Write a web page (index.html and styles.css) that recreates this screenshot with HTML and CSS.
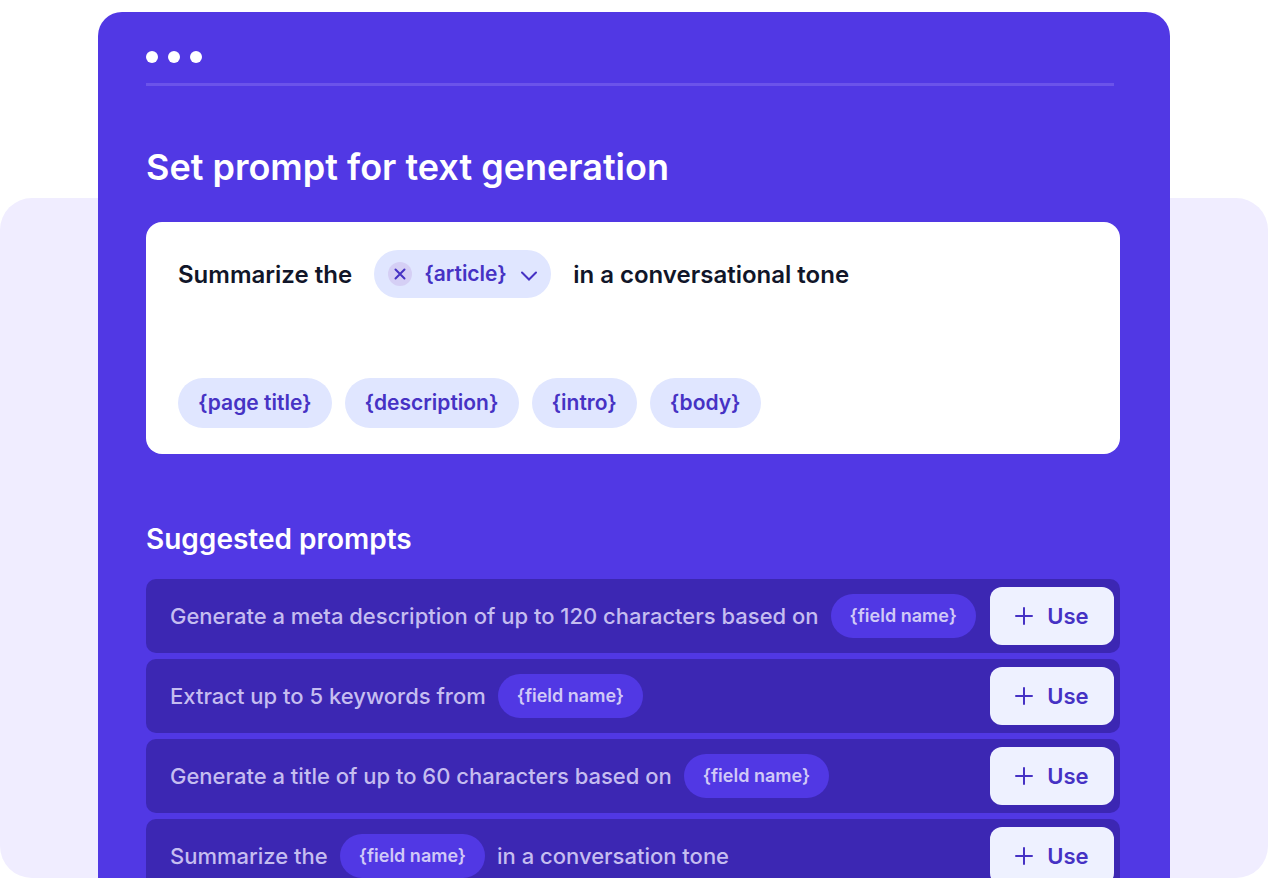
FILE: index.html
```html
<!DOCTYPE html>
<html lang="en">
<head>
    <meta charset="UTF-8">
    <meta name="viewport" content="width=device-width, initial-scale=1.0">
    <title>Set prompt for text generation</title>
    <link rel="stylesheet" href="styles.css">
</head>
<body>

    <div class="stage">
        <div class="backdrop"></div>

        <main class="window">
            <!-- Window bar -->
            <div class="window-bar">
                <span class="dot"></span>
                <span class="dot"></span>
                <span class="dot"></span>
            </div>

            <h1>Set prompt for text generation</h1>

            <!-- Prompt editor -->
            <section class="editor">
                <div class="prompt-line">
                    <span>Summarize the</span>
                    <div class="field-picker">
                        <button type="button" class="remove-btn" aria-label="Remove field">
                            <svg width="12" height="12" viewBox="0 0 12 12"><path d="M1.5 1.5L10.5 10.5M10.5 1.5L1.5 10.5"/></svg>
                        </button>
                        <select class="field-select" aria-label="Field">
                            <option>{article}</option>
                        </select>
                        <svg class="chevron" width="16" height="10" viewBox="0 0 16 10"><path d="M1 1.5L8 8.5L15 1.5"/></svg>
                    </div>
                    <span>in a conversational tone</span>
                </div>
                <div class="fields">
                    <button type="button" class="field-btn">{page title}</button>
                    <button type="button" class="field-btn">{description}</button>
                    <button type="button" class="field-btn">{intro}</button>
                    <button type="button" class="field-btn">{body}</button>
                </div>
            </section>

            <!-- Suggested prompts -->
            <h2>Suggested prompts</h2>
            <ul class="suggestions">
                <li class="suggestion">
                    <p>Generate a meta description of up to 120 characters based on <span class="token">{field name}</span></p>
                    <button type="button" class="use-btn">
                        <svg width="18" height="18" viewBox="0 0 18 18"><path d="M9 1V17M1 9H17"/></svg>
                        Use
                    </button>
                </li>
                <li class="suggestion">
                    <p>Extract up to 5 keywords from <span class="token">{field name}</span></p>
                    <button type="button" class="use-btn">
                        <svg width="18" height="18" viewBox="0 0 18 18"><path d="M9 1V17M1 9H17"/></svg>
                        Use
                    </button>
                </li>
                <li class="suggestion">
                    <p>Generate a title of up to 60 characters based on <span class="token">{field name}</span></p>
                    <button type="button" class="use-btn">
                        <svg width="18" height="18" viewBox="0 0 18 18"><path d="M9 1V17M1 9H17"/></svg>
                        Use
                    </button>
                </li>
                <li class="suggestion">
                    <p>Summarize the <span class="token">{field name}</span> in a conversation tone</p>
                    <button type="button" class="use-btn">
                        <svg width="18" height="18" viewBox="0 0 18 18"><path d="M9 1V17M1 9H17"/></svg>
                        Use
                    </button>
                </li>
            </ul>
        </main>
    </div>

</body>
</html>
```
FILE: styles.css
```css
* {
    box-sizing: border-box;
}
body {
    font-family: Inter, "Liberation Sans", sans-serif;
    margin: 0;
    background-color: #ffffff;
}
button, select {
    font-family: inherit;
    border: none;
    cursor: pointer;
}
svg {
    display: block;
    flex-shrink: 0;
    fill: none;
    stroke: #4632c4;
    stroke-width: 2;
    stroke-linecap: round;
}
.stage {
    position: relative;
    height: 100vh;
    overflow: hidden;
    padding: 12px 98px 0;
}
/* Pale panel behind the window */
.backdrop {
    position: absolute;
    inset: 198px 0 0;
    background-color: #f0edff;
    border-radius: 32px;
}
.window {
    position: relative;
    min-height: 100%;
    padding: 39px 50px 48px 48px;
    background-color: #5138e4;
    border-radius: 24px 24px 0 0;
    color: #ffffff;
}
.window-bar {
    display: flex;
    gap: 10px;
    margin-right: 6px;
    padding-bottom: 20px;
    border-bottom: 3px solid #6b53ea;
}
.dot {
    width: 12px;
    height: 12px;
    border-radius: 50%;
    background-color: #ffffff;
}
h1 {
    margin: 58px 0 32px;
    font-size: 36px;
    line-height: 46px;
    font-weight: 600;
}
/* Prompt editor */
.editor {
    padding: 28px 32px 26px;
    background-color: #ffffff;
    border-radius: 16px;
}
.prompt-line {
    display: flex;
    align-items: center;
    gap: 22px;
    color: #111629;
    font-size: 24px;
    font-weight: 600;
}
.field-picker {
    position: relative;
    display: flex;
    align-items: center;
    height: 48px;
    padding: 0 14px;
    background-color: #e0e6ff;
    border-radius: 24px;
}
.remove-btn {
    display: flex;
    align-items: center;
    justify-content: center;
    width: 24px;
    height: 24px;
    padding: 0;
    border-radius: 50%;
    background-color: #d5cff5;
}
.field-select {
    appearance: none;
    width: 125px;
    padding: 0 0 2px 12px;
    background: none;
    color: #4632c4;
    font-size: 21px;
    font-weight: 600;
}
.chevron {
    position: absolute;
    right: 14px;
    top: 21px;
    pointer-events: none;
}
.fields {
    display: flex;
    gap: 13px;
    margin-top: 80px;
}
.field-btn {
    height: 50px;
    padding: 0 20px 2px;
    background-color: #e0e6ff;
    border-radius: 25px;
    color: #4632c4;
    font-size: 21px;
    font-weight: 600;
}
/* Suggested prompts */
h2 {
    margin: 68px 0 22px;
    font-size: 28px;
    line-height: 35px;
    font-weight: 600;
}
.suggestions {
    display: flex;
    flex-direction: column;
    gap: 6px;
    margin: 0;
    padding: 0;
    list-style: none;
}
.suggestion {
    display: flex;
    align-items: center;
    justify-content: space-between;
    height: 74px;
    padding: 0 6px 0 24px;
    background-color: #3c27b3;
    border-radius: 10px;
}
.suggestion p {
    display: flex;
    align-items: center;
    gap: 12px;
    margin: 0;
    color: #c5bdf0;
    font-size: 22px;
    font-weight: 500;
}
.token {
    padding: 0 19px;
    background-color: #5138e4;
    border-radius: 22px;
    color: #d0c9f7;
    font-size: 18px;
    line-height: 44px;
    font-weight: 600;
}
.use-btn {
    display: flex;
    align-items: center;
    justify-content: center;
    gap: 14px;
    width: 124px;
    height: 58px;
    background-color: #eef1ff;
    border-radius: 12px;
    color: #4632c4;
    font-size: 22px;
    font-weight: 600;
}
```
